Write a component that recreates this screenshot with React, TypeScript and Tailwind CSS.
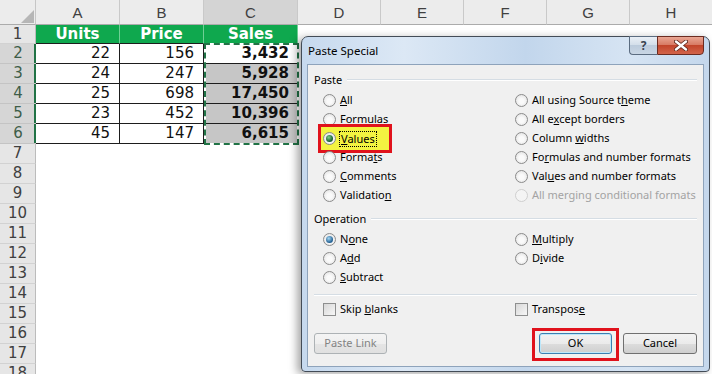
import React from "react";

const colHeaders = ["A", "B", "C", "D", "E", "F", "G", "H"];

const data = [
  [22, 156, "3,432"],
  [24, 247, "5,928"],
  [25, 698, "17,450"],
  [23, 452, "10,396"],
  [45, 147, "6,615"],
];

function Sheet() {
  const cells: React.ReactNode[] = [];
  // header row
  cells.push(
    <div key="corner" className="relative bg-[#ececec] border-r border-b border-r-[#c6c6c6] border-b-[#ababab]">
      <svg className="absolute left-0 top-0" width="36" height="25">
        <polygon points="34,10 34,23 21,23" fill="#b6b6b6" />
      </svg>
    </div>
  );
  colHeaders.forEach((c) => {
    cells.push(
      <div
        key={"h" + c}
        className={
          "flex items-center justify-center pt-[3px] border-r border-b border-r-[#c9c9c9] border-b-[#ababab] text-[15px] text-[#404040] font-['Liberation_Sans',sans-serif] " +
          (c === "C" ? "bg-[#d4d4d4]" : "bg-[#ececec]")
        }
      >
        {c}
      </div>
    );
  });
  // row 1
  cells.push(
    <div key="r1" className="flex items-center justify-center bg-[#e6e6e6] border-r border-b border-r-[#bcbcbc] border-b-[#d2d2d2] text-[15px] text-[#404040]">
      1
    </div>
  );
  ["Units", "Price", "Sales"].forEach((t) => {
    cells.push(
      <div key={"g" + t} className="flex items-center justify-center bg-[#0fa84e] border-r border-r-[#6fcf95] border-b border-b-[#1d1d1d] text-white font-bold text-[15px]">
        {t}
      </div>
    );
  });
  cells.push(<div key="r1e" className="col-span-5 bg-white" />);
  data.forEach((row, i) => {
    const n = i + 2;
    cells.push(
      <div key={"rh" + n} className="flex items-center justify-center bg-[#d6d6d6] border-b border-b-[#c4c4c4] shadow-[inset_-2px_0_0_#217346] text-[15px] text-[#3e5e49]">
        {n}
      </div>
    );
    cells.push(
      <div key={"a" + n} className="flex items-center justify-end pr-[9px] bg-white border-r border-b border-[#1d1d1d] text-[15px] text-[#111]">
        {row[0]}
      </div>
    );
    cells.push(
      <div key={"b" + n} className="flex items-center justify-end pr-[9px] bg-white border-r border-b border-[#1d1d1d] text-[15px] text-[#111]">
        {row[1]}
      </div>
    );
    cells.push(
      <div
        key={"c" + n}
        className={
          "flex items-center justify-end pr-[8px] border-r border-b border-[#1d1d1d] text-[15px] font-bold text-[#111] " +
          (n === 2 ? "bg-white" : "bg-[#c6c6c6]")
        }
      >
        {row[2]}
      </div>
    );
    cells.push(<div key={"e" + n} className="col-span-5 bg-white" />);
  });
  for (let n = 7; n <= 18; n++) {
    cells.push(
      <div key={"rh" + n} className="flex items-center justify-center bg-[#e6e6e6] border-r border-b border-r-[#bcbcbc] border-b-[#d2d2d2] text-[15px] text-[#404040]">
        {n}
      </div>
    );
    cells.push(<div key={"e" + n} className="col-span-8 bg-white" />);
  }
  return (
    <div className="grid grid-cols-[36px_84px_84px_94px_83px_83px_83px_83px_83px] grid-rows-[25px_19px_repeat(17,20px)] font-['DejaVu_Sans',sans-serif]">
      {cells}
    </div>
  );
}

function Radio({
  checked,
  disabled,
  green,
}: {
  checked?: boolean;
  disabled?: boolean;
  green?: boolean;
}) {
  return (
    <span
      className={
        "relative flex items-center justify-center w-[13px] h-[13px] shrink-0 rounded-full border " +
        (disabled
          ? "border-[#cfcfcf] bg-[#f4f4f4]"
          : "border-[#8b8b8b] bg-[radial-gradient(circle_at_50%_55%,#fafafa_30%,#dcdcdc)]")
      }
    >
      {checked && (
        <span
          className={
            "w-[7px] h-[7px] rounded-full " +
            (green
              ? "bg-[radial-gradient(circle_at_40%_35%,#7fd08c,#0f5a2a_70%)]"
              : "bg-[radial-gradient(circle_at_40%_35%,#a6d8f3,#1d5b8f_70%)]")
          }
        />
      )}
    </span>
  );
}

function Check() {
  return (
    <span className="w-[13px] h-[13px] shrink-0 border border-[#8e8f8f] bg-[linear-gradient(135deg,#d8d8d8,#f7f7f7)]" />
  );
}

function Opt({
  children,
  checked,
  disabled,
}: {
  children: React.ReactNode;
  checked?: boolean;
  disabled?: boolean;
}) {
  return (
    <div className="h-[19px] flex items-center gap-[4px] pl-[9px]">
      <Radio checked={checked} disabled={disabled} />
      <span className={disabled ? "text-[#a3a3a3]" : "text-black"}>{children}</span>
    </div>
  );
}

function Legend({ children }: { children: React.ReactNode }) {
  return (
    <div className="h-[16px] flex items-center gap-[5px]">
      <span>{children}</span>
      <span className="flex-1 h-[2px] border-t border-t-[#d5dde4] border-b border-b-white" />
    </div>
  );
}

function Dialog() {
  return (
    <div className="absolute left-[301px] top-[36px] w-[409px] h-[336px] rounded-t-[7px] rounded-b-[4px] border border-[#434c57] bg-[linear-gradient(90deg,#c6d9ee,#dce8f5_25%,#c2d6ec_55%,#d6e4f3_80%,#c4d7ec)] shadow-[-4px_2px_8px_rgba(0,0,0,0.35)] font-['Noto_Sans',sans-serif] text-[11px] text-black">
      <div className="relative h-[27px] flex items-center pl-[6px] text-[11.5px]">
        Paste Special
        <div className="absolute right-[5px] top-[-1px] flex h-[19px]">
          <div className="w-[28px] h-full flex items-center justify-center rounded-bl-[4px] border border-[#5b6c80] border-r-0 bg-[linear-gradient(180deg,#e9eff6,#d2dde9_50%,#bccbdc_50%,#c9d6e4)] text-[12px] font-bold text-[#3a4350]">
            ?
          </div>
          <div className="w-[47px] h-full flex items-center justify-center rounded-br-[4px] border border-[#6b2b20] bg-[linear-gradient(180deg,#e9a693,#d67760_50%,#c2452b_50%,#d2644a)]">
            <svg width="14" height="11" viewBox="0 0 14 11">
              <path d="M2 1.5 L12 9.5 M12 1.5 L2 9.5" stroke="#5a2418" strokeWidth="4" strokeLinecap="round" />
              <path d="M2 1.5 L12 9.5 M12 1.5 L2 9.5" stroke="#ffffff" strokeWidth="2.4" strokeLinecap="round" />
            </svg>
          </div>
        </div>
      </div>
      <div className="mx-[5px] h-[303px] border border-[#8ea3bb] bg-[#f0f0f0] px-[6px] pt-[7px]">
        <Legend>Paste</Legend>
        <div className="mt-[3px] grid grid-cols-[192px_1fr]">
          <div className="flex flex-col">
            <Opt>
              <u>A</u>ll
            </Opt>
            <Opt>
              <u>F</u>ormulas
            </Opt>
            <div className="relative h-[19px]">
              <div className="absolute left-[4px] top-[-5px] w-[74px] h-[29px] border-[3px] border-[#e0121c] bg-[#f3f341]" />
              <div className="relative h-[19px] flex items-center gap-[3px] pl-[9px]">
                <Radio checked green />
                <span className="px-[1px] border border-dotted border-black leading-[14px]">
                  <u>V</u>alues
                </span>
              </div>
            </div>
            <Opt>
              Forma<u>t</u>s
            </Opt>
            <Opt>
              <u>C</u>omments
            </Opt>
            <Opt>
              Validatio<u>n</u>
            </Opt>
          </div>
          <div className="flex flex-col">
            <Opt>
              All using Source t<u>h</u>eme
            </Opt>
            <Opt>
              All e<u>x</u>cept borders
            </Opt>
            <Opt>
              Column <u>w</u>idths
            </Opt>
            <Opt>
              Fo<u>r</u>mulas and number formats
            </Opt>
            <Opt>
              Val<u>u</u>es and number formats
            </Opt>
            <Opt disabled>All merging conditional formats</Opt>
          </div>
        </div>
        <div className="mt-[6px]">
          <Legend>Operation</Legend>
        </div>
        <div className="mt-[3px] grid grid-cols-[192px_1fr]">
          <div className="flex flex-col">
            <Opt checked>
              N<u>o</u>ne
            </Opt>
            <Opt>
              A<u>d</u>d
            </Opt>
            <Opt>
              <u>S</u>ubtract
            </Opt>
          </div>
          <div className="flex flex-col">
            <Opt>
              <u>M</u>ultiply
            </Opt>
            <Opt>
              D<u>i</u>vide
            </Opt>
          </div>
        </div>
        <div className="mt-[7px] h-[2px] border-t border-t-[#d5dde4] border-b border-b-white" />
        <div className="mt-[4px] grid grid-cols-[192px_1fr]">
          <div className="h-[19px] flex items-center gap-[4px] pl-[9px]">
            <Check />
            <span>
              Skip <u>b</u>lanks
            </span>
          </div>
          <div className="h-[19px] flex items-center gap-[4px] pl-[9px]">
            <Check />
            <span>
              Transpos<u>e</u>
            </span>
          </div>
        </div>
        <div className="mt-[14px] flex items-center">
          <div className="w-[73px] h-[21px] flex items-center justify-center rounded-[3px] border border-[#adb2b5] bg-[linear-gradient(180deg,#f4f4f4,#efefef_50%,#e5e5e5_50%,#e0e0e0)] text-[#838383]">
            Paste Link
          </div>
          <div className="flex-1" />
          <div className="relative w-[73px] h-[21px]">
            <div className="absolute left-[-7px] top-[-5px] w-[87px] h-[33px] border-[3px] border-[#e0121c]" />
            <div className="relative w-[73px] h-[21px] flex items-center justify-center rounded-[3px] border border-[#3c7fb1] shadow-[inset_0_0_0_1px_#bde8fb] bg-[linear-gradient(180deg,#f2f2f2,#ebebeb_50%,#dddddd_50%,#cfcfcf)]">
              OK
            </div>
          </div>
          <div className="ml-[11px] w-[74px] h-[21px] flex items-center justify-center rounded-[3px] border border-[#707070] bg-[linear-gradient(180deg,#f2f2f2,#ebebeb_50%,#dddddd_50%,#cfcfcf)]">
            Cancel
          </div>
        </div>
      </div>
    </div>
  );
}

export default function App() {
  return (
    <div className="relative w-[712px] h-[374px] overflow-hidden bg-white">
      <Sheet />
      {/* marching ants around copied range */}
      <div className="absolute left-[204px] top-[43px] w-[95px] h-[102px] border-2 border-white" />
      <div className="absolute left-[204px] top-[43px] w-[95px] h-[102px] border-2 border-dashed border-[#217346]" />
      <Dialog />
    </div>
  );
}
